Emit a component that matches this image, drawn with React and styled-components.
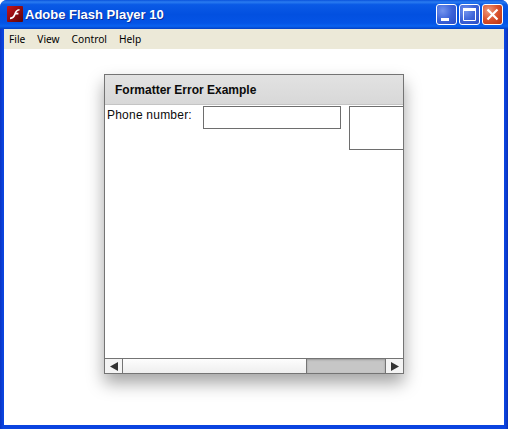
import React from 'react';
import styled, { createGlobalStyle } from 'styled-components';

const Global = createGlobalStyle`
  html, body { margin: 0; padding: 0; width: 508px; height: 429px; overflow: hidden; background: #fff; }
`;

const Win = styled.div`
  width: 508px; height: 429px; box-sizing: border-box;
  display: flex; flex-direction: column;
  background: linear-gradient(90deg, #0a34c4 0, #0a44e0 3px, #0a44e0 505px, #0a30b8 100%);
  border-radius: 7px 7px 0 0;
  overflow: hidden;
  font-family: "Liberation Sans", Arial, sans-serif;
`;
const TitleBar = styled.div`
  height: 29px; flex: none; box-sizing: border-box;
  display: flex; align-items: center; padding: 0 5px 1px 7px;
  background: linear-gradient(180deg, #0a52dc 0%, #2a7cf0 7%, #0a5ae6 16%, #0250e0 50%, #0454e6 80%, #0a62f0 90%, #0340c4 100%);
`;
const AppIcon = styled.svg`
  width: 16px; height: 16px; flex: none; margin-right: 2px;
`;
const Title = styled.div`
  flex: 1; color: #fff; font-weight: 700; font-size: 13px; letter-spacing: 0;
  font-family: "Liberation Sans", Arial, sans-serif;
  text-shadow: 1px 1px 0 #0b2f9c;
`;
const Ctrl = styled.div`
  width: 21px; height: 21px; box-sizing: border-box; margin-left: 2px;
  border: 1px solid #fff; border-radius: 3px;
  background: ${p => p.$close
    ? 'radial-gradient(circle at 30% 30%, #ee9a7e 0%, #d9512c 50%, #b93210 100%)'
    : 'radial-gradient(circle at 30% 30%, #7394ee 0%, #3c63d8 50%, #2a4cc4 100%)'};
  display: flex; align-items: center; justify-content: center;
  svg { display: block; }
`;
const Min = styled(Ctrl)`
  align-items: flex-end; justify-content: flex-start; padding: 0 0 3px 4px;
`;
const Body = styled.div`
  flex: 1; margin: 0 4px 4px; display: flex; flex-direction: column; min-height: 0;
`;
const Menu = styled.div`
  height: 20px; flex: none; background: #ece9d8; display: flex; align-items: center;
  padding: 0 0 0 5px; gap: 12px; color: #000;
  font-family: "Noto Sans", "Liberation Sans", sans-serif; font-size: 10.2px;
`;
const Stage = styled.div`
  flex: 1; background: #fff; padding: 25px 0 0 100px;
`;
const Panel = styled.div`
  width: 300px; height: 300px; box-sizing: border-box; border: 1px solid #747474;
  background: #fff; display: flex; flex-direction: column;
  box-shadow: 0 9px 16px rgba(0,0,0,.36);
`;
const PanelHead = styled.div`
  height: 30px; flex: none; box-sizing: border-box; display: flex; align-items: center; padding: 0 10px;
  background: linear-gradient(180deg, #e2e2e2, #d8d8d8);
  border-bottom: 1px solid #c4c4c4;
  font-size: 12px; font-weight: 700; color: #0b0b0b;
`;
const PanelBody = styled.div`
  flex: 1; display: flex; align-items: flex-start; padding-top: 1px; min-height: 0; overflow: hidden;
`;
const Label = styled.div`
  width: 98px; box-sizing: border-box; padding: 2px 0 0 2px; flex: none;
  font-size: 12px; letter-spacing: 0.22px; color: #0b0b0b;
`;
const Input = styled.div`
  width: 138px; height: 23px; box-sizing: border-box; flex: none; border: 1px solid #6e6e6e; background: #fff;
`;
const Box = styled.div`
  width: 54px; height: 44px; box-sizing: border-box; flex: none; margin-left: 8px;
  border: 1px solid #6e6e6e; border-right: none; background: #fff;
`;
const Scrollbar = styled.div`
  height: 15px; flex: none; display: flex; box-sizing: border-box; border-top: 1px solid #747474;
`;
const Arrow = styled.div`
  width: 18px; flex: none; box-sizing: border-box; background: #f4f4f4;
  ${p => p.$left ? 'border-right: 1px solid #747474;' : 'border-left: 1px solid #747474;'}
  display: flex; align-items: center; justify-content: center;
`;
const Track = styled.div`
  flex: 1; display: flex;
`;
const Thumb = styled.div`
  width: 184px; box-sizing: border-box; border-right: 1px solid #747474;
  background: linear-gradient(180deg, #fdfdfd, #eeeeee);
`;
const Rest = styled.div`
  flex: 1; background: #c6c6c6; box-shadow: inset 0 1px 2px #9a9a9a;
`;

export default function App() {
  return (
    <Win>
      <Global />
      <TitleBar>
        <AppIcon viewBox="0 0 16 16">
          <defs>
            <linearGradient id="fl" x1="0" y1="0" x2="1" y2="1">
              <stop offset="0" stopColor="#c8141c" />
              <stop offset="1" stopColor="#5a0408" />
            </linearGradient>
          </defs>
          <rect width="16" height="16" rx="1" fill="url(#fl)" />
          <path d="M3 11.5c2.600 0 3.600-2 4.400-4.200C8.200 5 9.400 3.300 12.500 3v1.600c-1.800.2-2.600 1-3.100 2.200h2v1.700H8.700c-.9 2.300-2.200 4.500-5.700 4.700z" fill="#fff" />
        </AppIcon>
        <Title>Adobe Flash Player 10</Title>
        <Min>
          <svg width="8" height="3"><rect width="8" height="3" fill="#fff" /></svg>
        </Min>
        <Ctrl>
          <svg width="13" height="13" viewBox="0 0 13 13"><path d="M.5 1.500h12v11H.5z" fill="none" stroke="#fff" /><rect width="13" height="3" fill="#fff" /></svg>
        </Ctrl>
        <Ctrl $close>
          <svg width="13" height="13" viewBox="0 0 13 13"><path d="M1.500 1.500l10 10M11.500 1.500l-10 10" stroke="#fff" strokeWidth="2.200" /></svg>
        </Ctrl>
      </TitleBar>
      <Body>
        <Menu>
          <span>File</span><span>View</span><span>Control</span><span>Help</span>
        </Menu>
        <Stage>
          <Panel>
            <PanelHead>Formatter Error Example</PanelHead>
            <PanelBody>
              <Label>Phone number:</Label>
              <Input />
              <Box />
            </PanelBody>
            <Scrollbar>
              <Arrow $left>
                <svg width="8" height="9"><path d="M0 4.500L8 0v9z" fill="#333" /></svg>
              </Arrow>
              <Track><Thumb /><Rest /></Track>
              <Arrow>
                <svg width="8" height="9"><path d="M8 4.500L0 0v9z" fill="#333" /></svg>
              </Arrow>
            </Scrollbar>
          </Panel>
        </Stage>
      </Body>
    </Win>
  );
}
